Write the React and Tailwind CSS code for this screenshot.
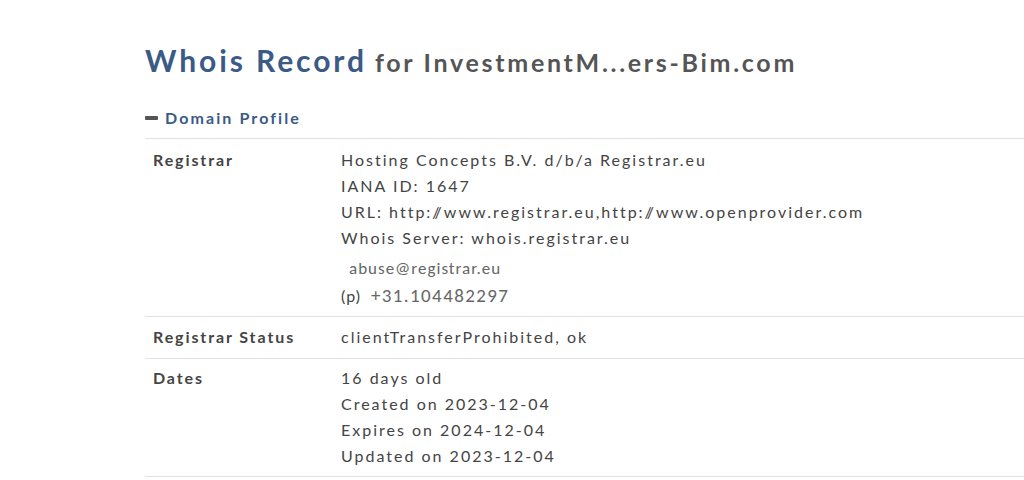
export default function App() {
  const font = { fontFamily: 'Lato, "Open Sans", sans-serif' };
  const calibri = { fontFamily: 'Carlito, "Open Sans", sans-serif' };
  return (
    <div className="w-[1024px] h-[480px] overflow-hidden bg-white" style={font}>
      <div className="pl-[145px] pt-[45px]">
        {/* Title */}
        <h1 className="flex items-baseline whitespace-nowrap leading-none">
          <span className="text-[30px] font-bold text-[#3b5a86] tracking-[2.9px]">Whois Record</span>
          <span className="ml-[8px] text-[25px] font-bold text-[#555555] tracking-[2.7px]">for InvestmentM...ers-Bim.com</span>
        </h1>

        {/* Section heading */}
        <div className="mt-[31px] flex items-center gap-[7px] text-[16px] font-bold text-[#3b5a86] tracking-[2.1px]">
          <span className="block w-[13px] h-[4px] bg-[#555555] rounded-[1px]"></span>
          <span>Domain Profile</span>
        </div>

        {/* Table */}
        <div className="mt-[8px] border-t border-[#e2e2e2] text-[16px] leading-[26px] text-[#444444]">
          <div className="flex border-b border-[#e2e2e2] pt-[8px] pb-[7px]">
            <div className="w-[196px] pl-[8px] font-bold tracking-[1.9px]">Registrar</div>
            <div className="tracking-[2px]">
              <div>Hosting Concepts B.V. d/b/a Registrar.eu</div>
              <div>IANA ID: 1647</div>
              <div>URL: http:<span className="tracking-[-5px]">/</span>/www.registrar.eu,http:<span className="tracking-[-5px]">/</span>/www.openprovider.com</div>
              <div>Whois Server: whois.registrar.eu</div>
              <div className="mt-[5px] pl-[8px] text-[17px] text-[#666666] tracking-[1px]" style={calibri}>abuse@registrar.eu</div>
              <div className="mt-[1px] flex items-baseline">
                <span className="text-[16px] tracking-[1px]">(p)</span>
                <span className="ml-[10px] text-[19px] text-[#666666] tracking-[1.4px]" style={calibri}>+31.104482297</span>
              </div>
            </div>
          </div>
          <div className="flex border-b border-[#e2e2e2] pt-[7px] pb-[8px]">
            <div className="w-[196px] pl-[8px] font-bold tracking-[1.9px]">Registrar Status</div>
            <div className="tracking-[2px]">clientTransferProhibited, ok</div>
          </div>
          <div className="flex border-b border-[#e2e2e2] pt-[6px] pb-[7px]">
            <div className="w-[196px] pl-[8px] font-bold tracking-[1.9px]">Dates</div>
            <div className="tracking-[2px]">
              <div>16 days old</div>
              <div>Created on 2023-12-04</div>
              <div>Expires on 2024-12-04</div>
              <div>Updated on 2023-12-04</div>
            </div>
          </div>
        </div>
      </div>
    </div>
  );
}
